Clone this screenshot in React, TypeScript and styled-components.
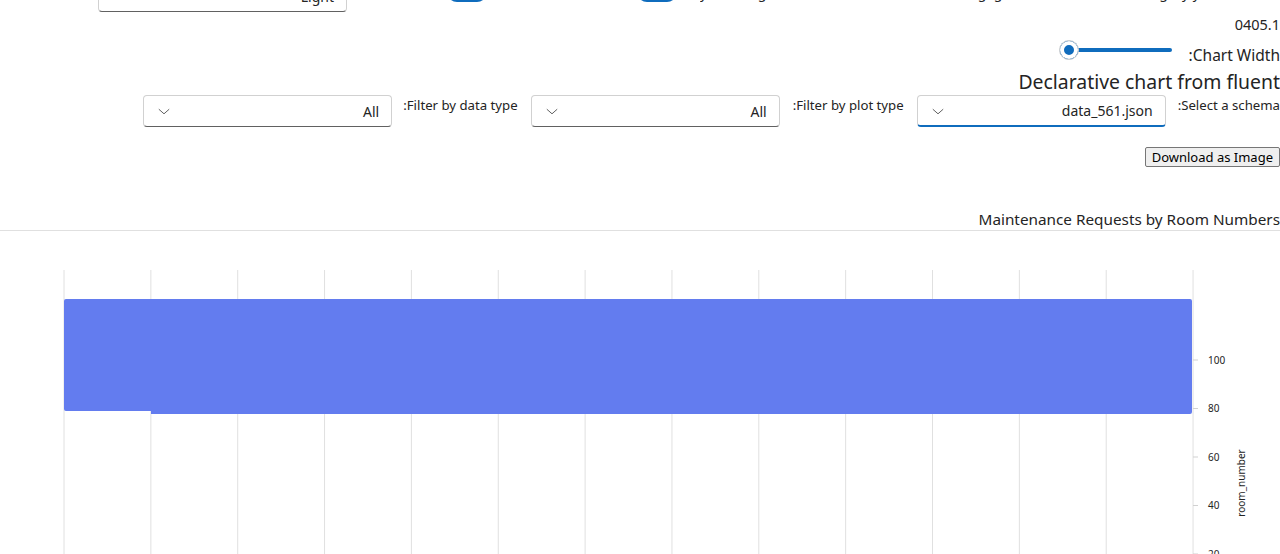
import React from 'react';
import styled, { createGlobalStyle } from 'styled-components';

const Global = createGlobalStyle`
  html, body { margin: 0; padding: 0; background: #fff; overflow: hidden; }
  body { font-family: "Segoe UI", "Noto Sans", sans-serif; color: #242424; }
  #root { width: 1280px; height: 554px; overflow: hidden; }
`;

const Page = styled.div`
  direction: rtl;
  width: 1280px;
  height: 554px;
  overflow: hidden;
  display: flex;
  flex-direction: column;
`;

const TopRow = styled.div`
  display: flex;
  align-items: flex-end;
  height: 32px;
  margin-top: -20px;
  padding-right: 80px;
`;

const TopText = styled.div<{ $w: number; $lift: number }>`
  width: ${(p) => p.$w}px;
  font-size: 14px;
  line-height: 20px;
  margin-bottom: ${(p) => p.$lift}px;
  white-space: nowrap;
  overflow: hidden;
  flex: none;
`;

const Switch = styled.div`
  width: 40px;
  height: 20px;
  border-radius: 10px;
  background: #0f6cbd;
  margin-bottom: 10px;
  flex: none;
`;

const Dropdown = styled.div<{ $w?: number; $focused?: boolean }>`
  box-sizing: border-box;
  width: ${(p) => p.$w ?? 249}px;
  height: 32px;
  border: 1px solid #d1d1d1;
  border-bottom: ${(p) => (p.$focused ? '2px solid #0f6cbd' : '1px solid #616161')};
  border-radius: 4px;
  display: flex;
  align-items: center;
  justify-content: space-between;
  padding: 0 12px 0 14px;
  font-size: 14px;
  color: #242424;
  flex: none;
  background: #fff;
`;

const Chevron = () => (
  <svg width="12" height="12" viewBox="0 0 12 12">
    <path d="M0.8 4.2 L6 8.8 L11.2 4.2" fill="none" stroke="#616161" strokeWidth="1" />
  </svg>
);

const Version = styled.div`
  font-size: 14.5px;
  line-height: 20px;
  margin-top: 2px;
`;

const SliderRow = styled.div`
  display: flex;
  align-items: flex-start;
  margin-top: 8px;
`;

const Label = styled.div`
  font-size: 14px;
  line-height: 20px;
  white-space: nowrap;
  flex: none;
`;

const SliderLabel = styled(Label)`
  font-size: 15.5px;
  margin-top: 3px;
  margin-left: 17px;
`;

const SliderBox = styled.div`
  position: relative;
  width: 113px;
  height: 20px;
`;

const Rail = styled.div`
  position: absolute;
  right: 0;
  left: 10px;
  top: 6px;
  height: 4px;
  border-radius: 2px;
  background: #0f6cbd;
`;

const Thumb = styled.div`
  position: absolute;
  left: 0;
  top: -2px;
  box-sizing: border-box;
  width: 20px;
  height: 20px;
  border-radius: 50%;
  background: #0f6cbd;
  border: 1px solid #d1d1d1;
  box-shadow: inset 0 0 0 4px #fff;
`;

const Title = styled.div`
  font-size: 19.4px;
  line-height: 26px;
  font-weight: 400;
  margin-top: 4px;
`;

const FilterRow = styled.div`
  display: flex;
  align-items: flex-start;
  margin-top: 0;
`;

const FilterLabel = styled(Label)<{ $gap: number }>`
  margin-left: ${(p) => p.$gap}px;
  font-size: 13.2px;
`;

const DropdownWrap = styled.div`
  margin-left: 13px;
`;

const ButtonRow = styled.div`
  display: flex;
  margin-top: 20px;
`;

const Button = styled.button`
  font-family: "Segoe UI", "Noto Sans", sans-serif;
  font-size: 13px;
  height: 20px;
  padding: 0 6px;
  border: 1px solid #767676;
  border-radius: 2px;
  background: #efefef;
  color: #000;
  line-height: 16px;
  direction: ltr;
`;

const ChartTitle = styled.div`
  margin-top: 42px;
  font-size: 15.3px;
  line-height: 21px;
  font-weight: 400;
  border-bottom: 1px solid #e0e0e0;
`;

const Plot = styled.svg`
  display: block;
  flex: none;
  direction: ltr;
`;

const gridXs = Array.from({ length: 14 }, (_, i) => 64 + i * 86.85);
const ticks = [
  { v: 100, y: 129 },
  { v: 80, y: 177.5 },
  { v: 60, y: 226 },
  { v: 40, y: 274.5 },
  { v: 20, y: 323 },
];

export default function App() {
  return (
    <>
      <Global />
      <Page dir="rtl">
        <TopRow>
          <TopText $w={500} $lift={9}>
            Enable plotly theming, use data_visualization rendering, gradient_colors, and category y
          </TopText>
          <Switch style={{ marginRight: 23 }} />
          <TopText $w={106} $lift={9} style={{ marginRight: 22 }}>
            Show borders
          </TopText>
          <Switch style={{ marginRight: 22 }} />
          <TopText $w={80} $lift={9} style={{ marginRight: 8 }}>
            Theme
          </TopText>
          <Dropdown $w={249} style={{ marginRight: 12 }}>
            <span>Light</span>
            <Chevron />
          </Dropdown>
        </TopRow>
        <Version>0405.1</Version>
        <SliderRow>
          <SliderLabel>Chart Width:</SliderLabel>
          <SliderBox>
            <Rail />
            <Thumb />
          </SliderBox>
        </SliderRow>
        <Title>Declarative chart from fluent</Title>
        <FilterRow>
          <FilterLabel $gap={12}>Select a schema:</FilterLabel>
          <DropdownWrap>
            <Dropdown $focused>
              <span>data_561.json</span>
              <Chevron />
            </Dropdown>
          </DropdownWrap>
          <FilterLabel $gap={13}>Filter by plot type:</FilterLabel>
          <DropdownWrap>
            <Dropdown>
              <span>All</span>
              <Chevron />
            </Dropdown>
          </DropdownWrap>
          <FilterLabel $gap={11}>Filter by data type:</FilterLabel>
          <Dropdown>
            <span>All</span>
            <Chevron />
          </Dropdown>
        </FilterRow>
        <ButtonRow>
          <Button>Download as Image</Button>
        </ButtonRow>
        <ChartTitle>Maintenance Requests by Room Numbers</ChartTitle>
        <Plot width="1280" height="323" viewBox="0 0 1280 323">
          {gridXs.map((x, i) => (
            <line key={i} x1={x} x2={x} y1={39} y2={323} stroke="#e0e0e0" strokeWidth={1} />
          ))}
          {ticks.map((t) => (
            <g key={t.v}>
              <line x1={1193} x2={1198} y1={t.y} y2={t.y} stroke="#d1d1d1" />
              <text x={1208} y={t.y + 3.5} fontSize="10" fill="#242424" fontFamily='"Segoe UI", "Noto Sans", sans-serif'>
                {t.v}
              </text>
            </g>
          ))}
          <path
            d="M64 70 Q64 68 66 68 L1190 68 Q1192 68 1192 70 L1192 181 Q1192 183 1190 183 L151 183 L151 180 L66 180 Q64 180 64 178 Z"
            fill="#637cef"
          />
          <text
            x={0}
            y={0}
            fontSize="10"
            fill="#242424"
            textAnchor="middle"
            fontFamily='"Segoe UI", "Noto Sans", sans-serif'
            transform="translate(1245 252) rotate(-90)"
          >
            room_number
          </text>
        </Plot>
      </Page>
    </>
  );
}
